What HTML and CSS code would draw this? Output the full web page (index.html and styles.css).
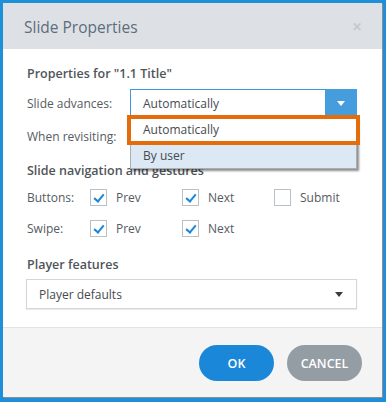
FILE: index.html
```html
<!DOCTYPE html>
<html lang="en">
<head>
    <meta charset="UTF-8">
    <title>Slide Properties</title>
    <link rel="stylesheet" href="styles.css">
</head>
<body>
    <div class="dialog">
        <div class="dialog-header">
            <span class="dialog-title">Slide Properties</span>
            <span class="close">&#x2715;</span>
        </div>

        <div class="dialog-body">
            <div class="section-title">Properties for "1.1 Title"</div>

            <div class="form-row">
                <span class="label">Slide advances:</span>
                <div class="select select-open">
                    <span class="select-text">Automatically</span>
                    <span class="select-btn"><span class="caret caret-white"></span></span>
                    <div class="dropdown">
                        <div class="dropdown-item marked">Automatically</div>
                        <div class="dropdown-item selected">By user</div>
                    </div>
                </div>
            </div>

            <div class="form-row">
                <span class="label">When revisiting:</span>
                <!-- covered by the open dropdown above -->
                <div class="select"></div>
            </div>

            <div class="section-title nav-title">Slide navigation and gestures</div>

            <div class="check-row">
                <span class="check-label">Buttons:</span>
                <label class="check"><span class="box on"></span>Prev</label>
                <label class="check"><span class="box on"></span>Next</label>
                <label class="check"><span class="box"></span>Submit</label>
            </div>
            <div class="check-row swipe">
                <span class="check-label">Swipe:</span>
                <label class="check"><span class="box on"></span>Prev</label>
                <label class="check"><span class="box on"></span>Next</label>
            </div>

            <div class="section-title player-title">Player features</div>
            <div class="player-select">
                <span>Player defaults</span>
                <span class="caret"></span>
            </div>
        </div>

        <div class="dialog-footer">
            <button type="button" class="btn btn-ok">OK</button>
            <button type="button" class="btn btn-cancel">CANCEL</button>
        </div>
    </div>
</body>
</html>
```

FILE: styles.css
```css
body {
    margin: 0;
    padding: 3px 4px 5px 3px;
    background-color: #1f8fd7; /* blue frame around the dialog */
    font-family: 'Open Sans', 'Noto Sans', Arial, sans-serif;
    font-size: 12px;
    color: #555b61;
}
.dialog {
    width: 379px;
    height: 394px;
    display: flex;
    flex-direction: column;
    background-color: #fff;
    box-shadow: 1px 1px 0 #8a8f94;
}

/* header */
.dialog-header {
    height: 46px;
    flex-shrink: 0;
    display: flex;
    align-items: center;
    justify-content: space-between;
    padding: 0 20px 0 21px;
    background-color: #dde1e5;
}
.dialog-title {
    font-size: 15.5px;
    color: #5e6d7c;
    margin-top: 1px;
}
.close {
    font-size: 12px;
    color: #c5c9cd;
    font-weight: bold;
}

/* body */
.dialog-body {
    flex: 1;
    padding: 16px 25px 0 24px;
}
.section-title {
    height: 18px;
    line-height: 18px;
    font-weight: 600;
    color: #505559;
    font-size: 12.5px;
}
.form-row {
    display: flex;
    align-items: center;
    height: 28px;
    margin-top: 6px;
}
.form-row + .form-row {
    margin-top: 5px;
}
.label {
    width: 103px;
}
.select {
    position: relative;
    flex: 1;
    height: 28px;
    box-sizing: border-box;
    border: 1px solid #c7ccd1;
    display: flex;
    align-items: center;
    padding-left: 12px;
    color: #464b50;
}
.select-open {
    border-color: #3f98dc;
}
.select-text {
    flex: 1;
}
.select-btn {
    width: 32px;
    height: 28px;
    margin: -1px -1px -1px 0;
    background-color: #469ddd;
    display: flex;
    align-items: center;
    justify-content: center;
}
.caret {
    width: 0;
    height: 0;
    border-left: 4px solid transparent;
    border-right: 4px solid transparent;
    border-top: 5px solid #3c3c3c;
}
.caret-white {
    border-top-color: #fff;
}
.dropdown {
    position: absolute;
    top: 27px;
    left: -1px;
    right: -1px;
    z-index: 10;
    background-color: #fff;
    border: 1px solid #a9afb5;
    box-shadow: 2px 2px 2px rgba(0, 0, 0, 0.45);
}
.dropdown-item {
    padding-left: 12px;
    color: #464b50;
}
.dropdown-item.marked {
    margin-top: 1px;
    height: 22px;
    line-height: 22px;
    outline: 4px solid #e46c0a; /* highlight around the first option */
}
.dropdown-item.selected {
    margin-top: 4px;
    height: 23px;
    line-height: 22px;
    background-color: #dce9f5;
}

.nav-title {
    margin-top: 12px;
}
.check-row {
    display: flex;
    align-items: center;
    height: 18px;
    margin-top: 8px;
}
.check-row.swipe {
    margin-top: 13px;
}
.check-label {
    width: 63px;
    flex-shrink: 0;
}
.check {
    width: 92px;
    flex-shrink: 0;
    display: flex;
    align-items: center;
}
.box {
    width: 17px;
    height: 17px;
    box-sizing: border-box;
    border: 1px solid #b9c0c6;
    margin-right: 9px;
    position: relative;
}
.box.on::after {
    content: "";
    position: absolute;
    left: 5px;
    top: 2px;
    width: 4px;
    height: 8px;
    border-right: 2px solid #1a86d9;
    border-bottom: 2px solid #1a86d9;
    transform: rotate(40deg);
}
.player-title {
    margin-top: 19px;
}
.player-select {
    margin-top: 5px;
    margin-left: -1px;
    height: 30px;
    box-sizing: border-box;
    border: 1px solid #d3d7da;
    box-shadow: 0 1px 1px rgba(0, 0, 0, 0.08);
    display: flex;
    align-items: center;
    justify-content: space-between;
    padding: 0 13px 0 12px;
    color: #464b50;
}

/* footer */
.dialog-footer {
    height: 70px;
    flex-shrink: 0;
    box-sizing: border-box;
    border-top: 1px solid #e1e3e5;
    background-color: #f4f4f4;
    display: flex;
    justify-content: flex-end;
    align-items: flex-start;
    gap: 13px;
    padding: 17px 20px 0 0;
}
.btn {
    width: 75px;
    height: 36px;
    border: none;
    border-radius: 18px;
    color: #fff;
    font-family: 'Open Sans', 'Noto Sans', Arial, sans-serif;
    font-size: 12.5px;
    font-weight: 600;
    cursor: pointer;
}
.btn-ok {
    background-color: #1a87d8;
}
.btn-cancel {
    background-color: #949ca4;
}
```
